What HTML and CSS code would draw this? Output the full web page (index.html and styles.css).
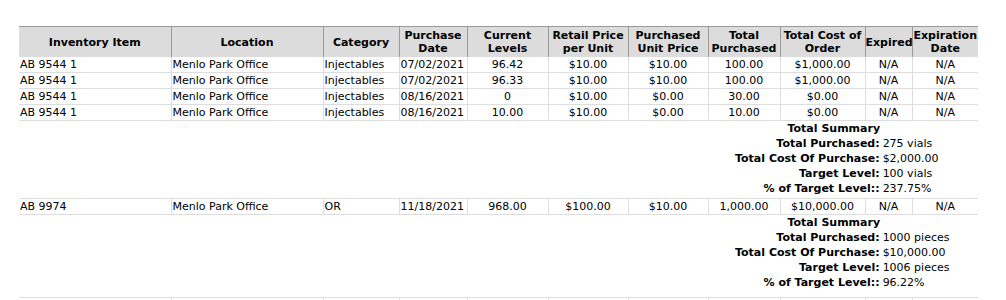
FILE: index.html
```html
<!DOCTYPE html>
<html>
<head>
<meta charset="utf-8">
<link rel="stylesheet" href="styles.css">
</head>
<body>
<div class="page">
<table class="inv">
  <colgroup>
    <col class="c1"><col class="c2"><col class="c3"><col class="c4"><col class="c5"><col class="c6"><col class="c7"><col class="c8"><col class="c9"><col class="c10"><col class="c11">
  </colgroup>
  <thead>
    <tr>
      <th>Inventory Item</th>
      <th>Location</th>
      <th>Category</th>
      <th>Purchase Date</th>
      <th>Current Levels</th>
      <th>Retail Price per Unit</th>
      <th>Purchased Unit Price</th>
      <th>Total Purchased</th>
      <th>Total Cost of Order</th>
      <th>Expired</th>
      <th>Expiration Date</th>
    </tr>
  </thead>
  <tbody>
    <tr>
      <td>AB 9544 1</td><td>Menlo Park Office</td><td>Injectables</td><td>07/02/2021</td>
      <td class="ctr">96.42</td><td class="ctr">$10.00</td><td class="ctr">$10.00</td><td class="ctr">100.00</td><td class="ctr">$1,000.00</td><td class="ctr">N/A</td><td class="ctr">N/A</td>
    </tr>
    <tr>
      <td>AB 9544 1</td><td>Menlo Park Office</td><td>Injectables</td><td>07/02/2021</td>
      <td class="ctr">96.33</td><td class="ctr">$10.00</td><td class="ctr">$10.00</td><td class="ctr">100.00</td><td class="ctr">$1,000.00</td><td class="ctr">N/A</td><td class="ctr">N/A</td>
    </tr>
    <tr>
      <td>AB 9544 1</td><td>Menlo Park Office</td><td>Injectables</td><td>08/16/2021</td>
      <td class="ctr">0</td><td class="ctr">$10.00</td><td class="ctr">$0.00</td><td class="ctr">30.00</td><td class="ctr">$0.00</td><td class="ctr">N/A</td><td class="ctr">N/A</td>
    </tr>
    <tr>
      <td>AB 9544 1</td><td>Menlo Park Office</td><td>Injectables</td><td>08/16/2021</td>
      <td class="ctr">10.00</td><td class="ctr">$10.00</td><td class="ctr">$0.00</td><td class="ctr">10.00</td><td class="ctr">$0.00</td><td class="ctr">N/A</td><td class="ctr">N/A</td>
    </tr>
    <tr class="sumrow">
      <td colspan="11" class="sumcell">
        <div class="summary">
          <div class="sum-title">Total Summary</div>
          <div class="sum-label">Total Purchased:</div><div class="sum-val">275 vials</div>
          <div class="sum-label">Total Cost Of Purchase:</div><div class="sum-val">$2,000.00</div>
          <div class="sum-label">Target Level:</div><div class="sum-val">100 vials</div>
          <div class="sum-label">% of Target Level::</div><div class="sum-val">237.75%</div>
        </div>
      </td>
    </tr>
    <tr>
      <td>AB 9974</td><td>Menlo Park Office</td><td>OR</td><td>11/18/2021</td>
      <td class="ctr">968.00</td><td class="ctr">$100.00</td><td class="ctr">$10.00</td><td class="ctr">1,000.00</td><td class="ctr">$10,000.00</td><td class="ctr">N/A</td><td class="ctr">N/A</td>
    </tr>
    <tr class="sumrow">
      <td colspan="11" class="sumcell sumcell-tall">
        <div class="summary">
          <div class="sum-title">Total Summary</div>
          <div class="sum-label">Total Purchased:</div><div class="sum-val">1000 pieces</div>
          <div class="sum-label">Total Cost Of Purchase:</div><div class="sum-val">$10,000.00</div>
          <div class="sum-label">Target Level:</div><div class="sum-val">1006 pieces</div>
          <div class="sum-label">% of Target Level::</div><div class="sum-val">96.22%</div>
        </div>
      </td>
    </tr>
    <tr>
      <td>&nbsp;</td><td>&nbsp;</td><td>&nbsp;</td><td>&nbsp;</td><td>&nbsp;</td><td>&nbsp;</td><td>&nbsp;</td><td>&nbsp;</td><td>&nbsp;</td><td>&nbsp;</td><td>&nbsp;</td>
    </tr>
  </tbody>
</table>
</div>
</body>
</html>
```

FILE: styles.css
```css
html, body {
  margin: 0;
  padding: 0;
  background: #ffffff;
}

.page {
  padding: 26px 0 0 19px;
  font-family: "DejaVu Sans", Verdana, sans-serif;
  font-size: 11px;
  color: #000;
}

.inv {
  border-collapse: collapse;
  table-layout: fixed;
  width: 959px;
}

.c1 { width: 152px; }
.c2 { width: 152px; }
.c3 { width: 76px; }
.c4 { width: 68px; }
.c5 { width: 81px; }
.c6 { width: 80px; }
.c7 { width: 80px; }
.c8 { width: 72px; }
.c9 { width: 85px; }
.c10 { width: 47px; }
.c11 { width: 66px; }

.inv th {
  background: #dcdcdc;
  font-weight: bold;
  text-align: center;
  vertical-align: middle;
  line-height: 13px;
  padding: 2px 0 2px;
  border-top: 1px solid #9a9a9a;
  white-space: normal;
}

.inv th + th {
  border-left: 1px solid #9a9a9a;
}

.inv td {
  line-height: 13px;
  padding: 1px 1px 1px 1px;
  border-bottom: 1px solid #dddddd;
  white-space: nowrap;
  overflow: hidden;
}

.inv td + td {
  border-left: 1px solid #dddddd;
}

.inv td.ctr {
  text-align: center;
}

.inv td.sumcell {
  padding: 0 0 2px 716px;
  overflow: visible;
}

.inv td.sumcell-tall {
  padding-bottom: 7px;
}

.summary {
  display: grid;
  grid-template-columns: auto 50px;
  column-gap: 3px;
  width: max-content;
  line-height: 15px;
}

.sum-title {
  grid-column: 1 / 3;
  text-align: center;
  font-weight: bold;
}

.sum-label {
  text-align: right;
  font-weight: bold;
}

.sum-val {
  text-align: left;
  white-space: nowrap;
}
```
